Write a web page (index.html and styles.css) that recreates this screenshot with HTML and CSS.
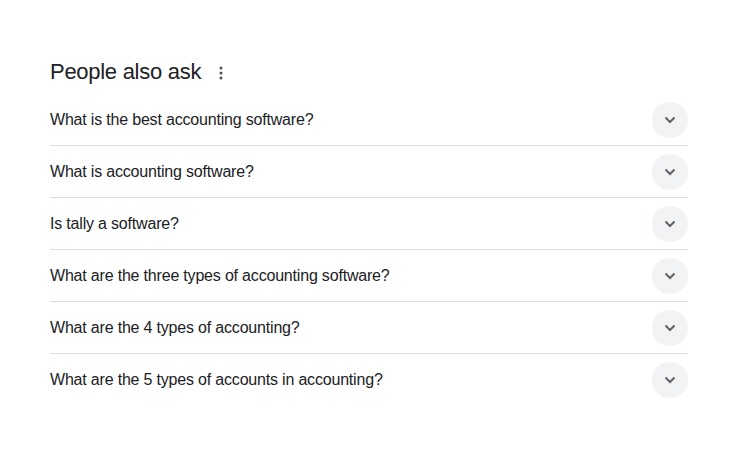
FILE: index.html
```html
<!DOCTYPE html>
<html>
<head>
<meta charset="utf-8">
<link rel="stylesheet" href="styles.css">
</head>
<body>
<div class="paa">
  <div class="head">
    <span class="title">People also ask</span>
    <span class="dots"><svg width="4" height="14" viewBox="0 0 4 14"><circle cx="2" cy="2" r="1.5"/><circle cx="2" cy="7" r="1.5"/><circle cx="2" cy="12" r="1.5"/></svg></span>
  </div>
  <div class="list">
    <div class="row"><span class="q">What is the best accounting software?</span><span class="btn"><svg width="12" height="8" viewBox="0 0 12 8"><path d="M1.5 1.5 L6 6 L10.5 1.5" fill="none" stroke="#5f6368" stroke-width="2"/></svg></span></div>
    <div class="row"><span class="q">What is accounting software?</span><span class="btn"><svg width="12" height="8" viewBox="0 0 12 8"><path d="M1.5 1.5 L6 6 L10.5 1.5" fill="none" stroke="#5f6368" stroke-width="2"/></svg></span></div>
    <div class="row"><span class="q">Is tally a software?</span><span class="btn"><svg width="12" height="8" viewBox="0 0 12 8"><path d="M1.5 1.5 L6 6 L10.5 1.5" fill="none" stroke="#5f6368" stroke-width="2"/></svg></span></div>
    <div class="row"><span class="q">What are the three types of accounting software?</span><span class="btn"><svg width="12" height="8" viewBox="0 0 12 8"><path d="M1.5 1.5 L6 6 L10.5 1.5" fill="none" stroke="#5f6368" stroke-width="2"/></svg></span></div>
    <div class="row"><span class="q">What are the 4 types of accounting?</span><span class="btn"><svg width="12" height="8" viewBox="0 0 12 8"><path d="M1.5 1.5 L6 6 L10.5 1.5" fill="none" stroke="#5f6368" stroke-width="2"/></svg></span></div>
    <div class="row last"><span class="q">What are the 5 types of accounts in accounting?</span><span class="btn"><svg width="12" height="8" viewBox="0 0 12 8"><path d="M1.5 1.5 L6 6 L10.5 1.5" fill="none" stroke="#5f6368" stroke-width="2"/></svg></span></div>
  </div>
</div>
</body>
</html>
```
FILE: styles.css
```css
html, body {
  margin: 0;
  padding: 0;
  background: #ffffff;
}
body {
  font-family: "Liberation Sans", Arial, sans-serif;
  color: #202124;
}
.paa {
  width: 638px;
  padding: 58px 0 0 50px;
}
.head {
  display: flex;
  align-items: center;
  height: 28px;
}
.title {
  font-size: 22px;
  line-height: 28px;
  letter-spacing: -0.28px;
  color: #202124;
}
.dots {
  display: flex;
  margin-left: 18px;
  margin-top: 1px;
}
.dots svg {
  fill: #4d5156;
}
.list {
  margin-top: 8px;
}
.row {
  display: flex;
  align-items: center;
  justify-content: space-between;
  height: 51px;
  border-bottom: 1px solid #dadce0;
}
.row.last {
  border-bottom: none;
}
.q {
  font-size: 16px;
  line-height: 24px;
  letter-spacing: -0.19px;
}
.btn {
  width: 36px;
  height: 36px;
  border-radius: 50%;
  background: #f1f3f4;
  display: flex;
  align-items: center;
  justify-content: center;
}
```
